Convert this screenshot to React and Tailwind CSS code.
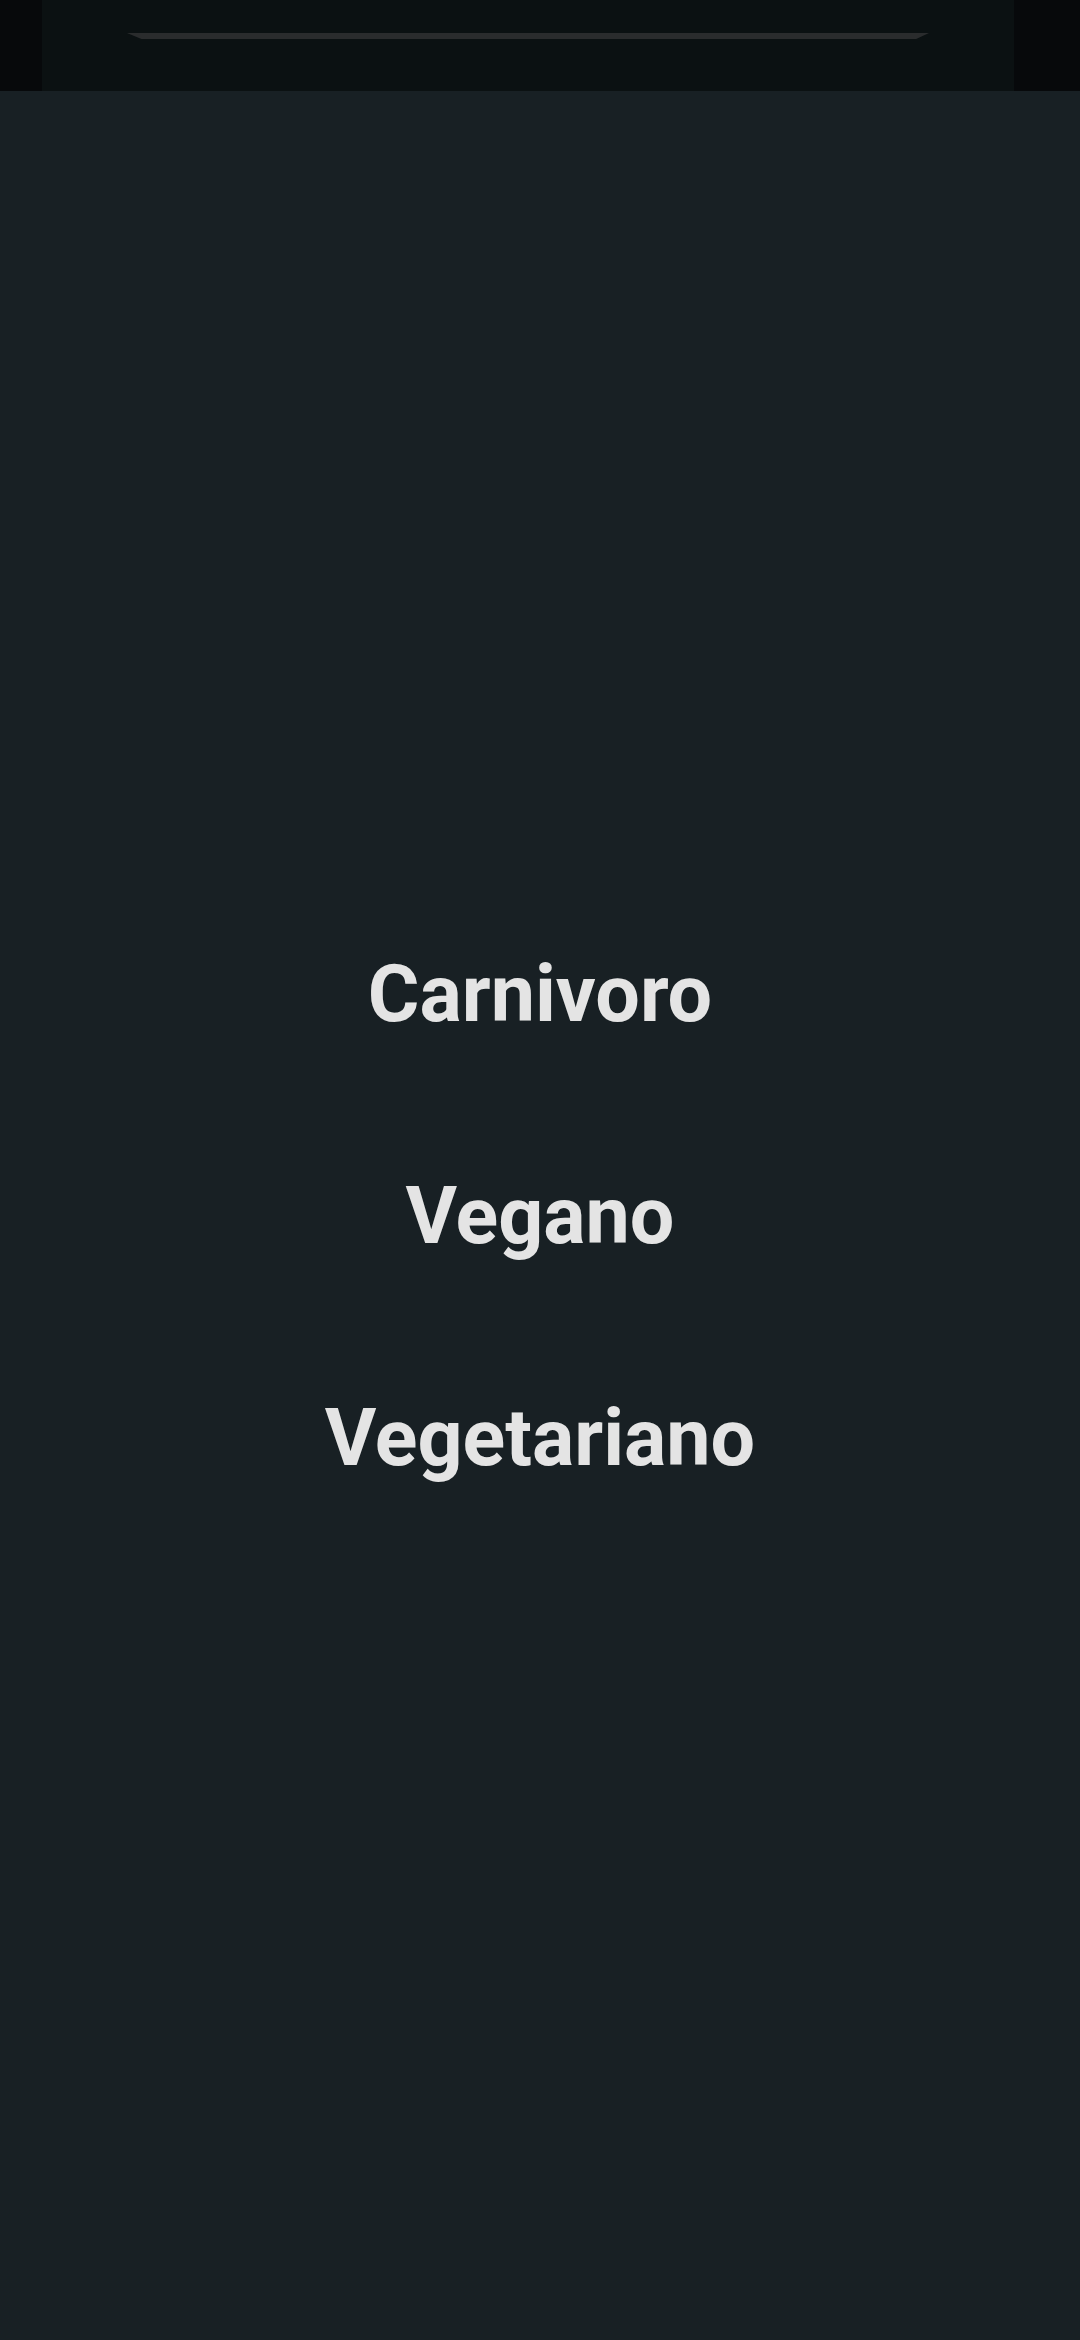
export default function App() {
  return (
    <div className="w-[1080px] h-[2340px] flex flex-col bg-[#182024]" style={{ fontFamily: "Roboto, 'Noto Sans', sans-serif" }}>
      <div className="h-[91px] flex shrink-0">
        <div className="w-[42px] bg-[#07090b]" />
        <div className="flex-1 bg-[#0b1112] relative">
          <div
            className="absolute top-[33px] left-[85px] w-[802px] h-[6px] bg-[#2a2c2d]"
            style={{ clipPath: "polygon(0 0, 100% 0, 98.4% 100%, 1.8% 100%)" }}
          />
        </div>
        <div className="w-[66px] bg-[#07090b]" />
      </div>
      <div className="flex-1 flex flex-col items-center justify-center">
        <div className="text-[79px] leading-[222px] font-bold text-[#e4e4e4]">Carnivoro</div>
        <div className="text-[79px] leading-[222px] font-bold text-[#e4e4e4]">Vegano</div>
        <div className="text-[79px] leading-[222px] font-bold text-[#e4e4e4]">Vegetariano</div>
      </div>
    </div>
  );
}
